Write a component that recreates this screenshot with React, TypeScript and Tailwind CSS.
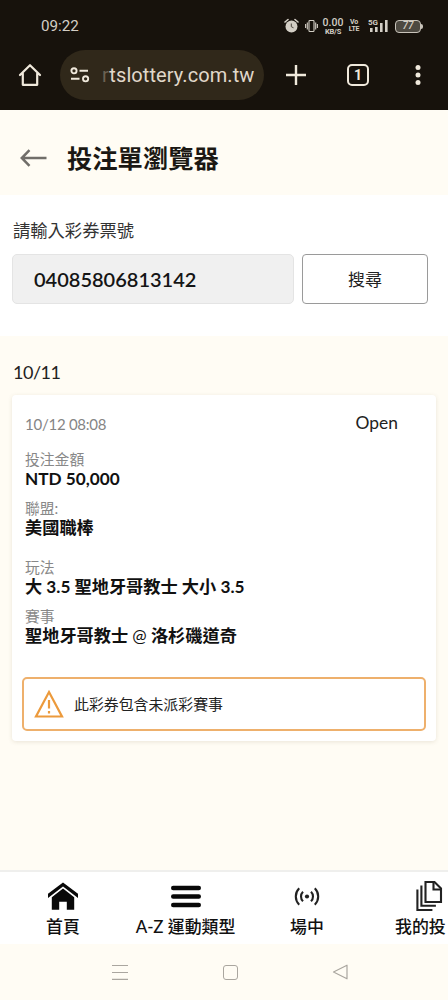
import React from "react";

const entries = [
  { label: "投注金額", value: "NTD 50,000", gap: "mt-[14px]" },
  { label: "聯盟:", value: "美國職棒", gap: "mt-[10px]" },
  { label: "玩法", value: "大 3.5 聖地牙哥教士 大小 3.5", gap: "mt-5" },
  {
    label: "賽事",
    value: (
      <>
        聖地牙哥教士 <span className="font-normal">@</span> 洛杉磯道奇
      </>
    ),
    gap: "mt-[10px]",
  },
];

function StatusBar() {
  return (
    <div className="flex h-[50px] items-center pt-[2px] pl-[41px] font-['Roboto',sans-serif] text-[#d3cec5]">
      <span className="w-[243px] text-[15.2px] leading-5">09:22</span>
      {/* alarm */}
      <svg width="15" height="16" viewBox="0 0 15 16" fill="none" className="shrink-0">
        <circle cx="7.5" cy="8.5" r="6" fill="currentColor" />
        <path d="M1 4 4 1.5M14 4 11 1.5" stroke="currentColor" strokeWidth="1.6" strokeLinecap="round" />
        <path d="M7.3 5.5v3.2l2.2 1.1" stroke="#4a453d" strokeWidth="1" />
      </svg>
      {/* vibrate */}
      <svg width="13" height="14" viewBox="0 0 13 14" fill="none" stroke="currentColor" strokeWidth="1.1" className="ml-[6px] shrink-0">
        <rect x="4" y="1.5" width="5" height="11" rx=".8" />
        <path d="M2.3 3.5v7M.6 5v4M10.7 3.5v7M12.4 5v4" />
      </svg>
      <div className="ml-[4px] flex w-[22px] flex-col items-center">
        <span className="text-[10.5px] leading-[10px] font-medium">0.00</span>
        <span className="text-[7.5px] leading-[7px] font-bold tracking-[-0.2px]">KB/S</span>
      </div>
      <div className="ml-[4px] flex w-[12px] flex-col items-center text-[7px] leading-[7px] font-bold tracking-[-0.3px]">
        <span>Vo</span>
        <span>LTE</span>
      </div>
      <svg width="22" height="16" viewBox="0 0 22 16" className="ml-[8px] shrink-0" fill="currentColor">
        <text x="0" y="7" fontSize="8" fontWeight="700">5G</text>
        <path d="M2 10h2.6v4H2zM7 9h2.6v5H7zM12 5h2.6v9H12zM17 2h2.6v12H17z" />
      </svg>
      <div className="ml-[5px] flex h-[13px] w-[26px] items-center justify-center rounded-[4px] border border-[#c8c3ba] bg-[#4d4941] text-[10px] leading-none font-medium italic">
        77
      </div>
      <span className="h-[5px] w-[2px] rounded-r bg-[#c8c3ba]" />
    </div>
  );
}

function BrowserBar() {
  return (
    <div className="flex h-[50px] items-center pl-[18px] text-[#f0e9dc]">
      <svg width="24" height="24" viewBox="0 0 24 24" fill="none" stroke="currentColor" strokeWidth="2.2" strokeLinejoin="round" strokeLinecap="round">
        <path d="M2 12 12 2.2 22 12M4.8 10.4v11.4h14.4V10.4" />
      </svg>
      <div className="ml-[18px] flex h-[50px] w-[204px] items-center rounded-full bg-[#30281a] pl-[10px]">
        <svg width="20" height="18" viewBox="0 0 20 18" fill="none" stroke="currentColor" strokeWidth="1.9">
          <circle cx="4" cy="4.8" r="2.6" />
          <path d="M9.5 4.8H18M1 12.8h8.5" />
          <circle cx="15.6" cy="12.8" r="2.6" />
        </svg>
        <span className="ml-[12px] font-['Roboto',sans-serif] text-[20px] leading-6 tracking-[0.08px] whitespace-nowrap text-[#e0d8ca]">
          <span className="text-[#6b6252]">r</span>tslottery.com.tw
        </span>
      </div>
      <svg width="20" height="20" viewBox="0 0 20 20" stroke="currentColor" strokeWidth="2.4" className="ml-[22px]">
        <path d="M0 10h20M10 0v20" />
      </svg>
      <div className="ml-[41px] flex h-[22px] w-[22px] items-center justify-center rounded-[5px] border-2 border-current font-['Roboto',sans-serif] text-[14px] leading-none font-bold">
        1
      </div>
      <svg width="6" height="20" viewBox="0 0 6 20" fill="currentColor" className="ml-[46px]">
        <circle cx="3" cy="2.5" r="2.5" />
        <circle cx="3" cy="10" r="2.5" />
        <circle cx="3" cy="17.5" r="2.5" />
      </svg>
    </div>
  );
}

function TicketCard() {
  return (
    <div className="mx-3 mt-[10px] h-[346px] rounded-[4px] bg-white px-[10px] pt-[19px] shadow-[0_1px_4px_rgba(90,70,30,0.13)]">
      <div className="flex h-[21px] items-center justify-between pr-[28px] pl-[3px]">
        <span className="text-[15px] tracking-[-0.25px] text-[#858585]">10/12 08:08</span>
        <span className="-mt-[2px] text-[17.4px] text-[#222]">Open</span>
      </div>
      {entries.map((entry) => (
        <div key={entry.label} className={`pl-[3px] ${entry.gap}`}>
          <div className="h-[20px] text-[14.8px] leading-[20px] text-[#888]">{entry.label}</div>
          <div className="h-[19px] text-[17.2px] leading-[20px] font-bold whitespace-nowrap text-[#111]">{entry.value}</div>
        </div>
      ))}
      <div className="mt-[32px] flex h-[54px] items-center rounded-[5px] border-2 border-[#eeb06c] pl-[9px]">
        <svg width="32" height="30" viewBox="0 0 32 30" fill="none" stroke="#ec9a3c" strokeWidth="2.2">
          <path d="M16 3 29 27.5H3z" />
          <path d="M16 11v8.5M16 22v2.4" />
        </svg>
        <span className="mt-px ml-[9px] text-[14.9px] text-[#222]">此彩券包含未派彩賽事</span>
      </div>
    </div>
  );
}

function TabBar() {
  return (
    <nav className="flex h-[74px] overflow-hidden border-t-2 border-[#efefed] bg-white text-[16.9px] leading-5 font-medium text-[#111]">
      <div className="flex w-[126px] shrink-0 flex-col items-center">
        <svg width="32" height="30" viewBox="0 0 32 30" className="mt-[9px]" fill="#080808">
          <path d="M16 1.5 31 12.8v4.2L16 5.6 1 17v-4.2z" />
          <path d="M16 7.6 27.2 16.2V28.8h-7.4v-8h-7.6v8H4.8V16.2z" />
        </svg>
        <span className="mt-[6px]">首頁</span>
      </div>
      <div className="flex w-[119px] shrink-0 flex-col items-center">
        <svg width="32" height="30" viewBox="0 0 32 30" className="mt-[9px]" stroke="#080808" strokeWidth="4.4" strokeLinecap="round">
          <path d="M3.2 7h25.6M3.2 15.5h25.6M3.2 24h25.6" />
        </svg>
        <span className="mt-[6px] whitespace-nowrap">A-Z 運動類型</span>
      </div>
      <div className="flex w-[124px] shrink-0 flex-col items-center">
        <svg width="26" height="30" viewBox="0 0 26 30" className="mt-[9px]" fill="none" stroke="#222" strokeWidth="2.1">
          <circle cx="13" cy="15.5" r="2.1" fill="#222" stroke="none" />
          <path d="M9 10.7a6.8 6.8 0 0 0 0 9.6M17 10.7a6.8 6.8 0 0 1 0 9.6M5.2 7.3a11.6 11.6 0 0 0 0 16.4M20.8 7.3a11.6 11.6 0 0 1 0 16.4" />
        </svg>
        <span className="mt-[6px]">場中</span>
      </div>
      <div className="flex w-[79px] shrink-0 flex-col pl-[26px]">
        <svg width="28" height="32" viewBox="0 0 28 32" className="mt-[8px] ml-[20px]" fill="none" stroke="#222" strokeWidth="2.1">
          <path d="M10.5 2h9L26 8.5V22H10.5z" />
          <path d="M18.5 2.5v7h7" />
          <path d="M6.4 5.5v20.3h14.5M2.4 9.5v20.5h15" />
        </svg>
        <span className="mt-[5px] whitespace-nowrap">我的投</span>
      </div>
    </nav>
  );
}

function SystemNav() {
  return (
    <div className="flex h-[56px] items-center pl-[112px] text-[#aaa69f]">
      <svg width="16" height="16" viewBox="0 0 16 16" stroke="currentColor" strokeWidth="1.2">
        <path d="M0 1.5h16M0 8.5h16M0 15.3h16" />
      </svg>
      <div className="ml-[95px] h-[15px] w-[15px] rounded-[3px] border border-current" />
      <svg width="16" height="16" viewBox="0 0 16 16" fill="none" stroke="currentColor" strokeWidth="1.2" strokeLinejoin="round" className="ml-[94px]">
        <path d="M1.5 8 15 1.2v13.6z" />
      </svg>
    </div>
  );
}

export default function App() {
  return (
    <div className="flex h-[1000px] w-[448px] flex-col overflow-hidden bg-[#fffcf4] font-['Lato','Noto_Sans_CJK_TC',sans-serif]">
      <header className="h-[110px] shrink-0 bg-[#17120c]">
        <StatusBar />
        <BrowserBar />
      </header>

      <div className="flex h-[85px] shrink-0 items-center pt-[11px] pl-5">
        <svg width="27" height="18" viewBox="0 0 27 18" fill="none" stroke="#716e69" strokeWidth="2.5">
          <path d="M26.5 9H2M9.5 1.2 1.8 9l7.7 7.8" />
        </svg>
        <h1 className="ml-[20px] text-[25.3px] leading-8 font-bold text-[#1b1813]">投注單瀏覽器</h1>
      </div>

      <section className="h-[141px] shrink-0 bg-white pt-[25px] pl-3">
        <p className="h-[22px] pl-px text-[17.3px] leading-[22px] text-[#333]">請輸入彩券票號</p>
        <div className="mt-[12px] flex gap-2">
          <div className="flex h-[50px] w-[282px] items-center rounded-[5px] border border-[#e4e4e4] bg-[#f0f0f0] pl-[21px] text-[20px] font-semibold text-[#151515]">
            04085806813142
          </div>
          <button className="h-[50px] w-[126px] rounded-[4px] border border-[#9a9a9a] bg-white pt-px text-[17px] text-[#222]">搜尋</button>
        </div>
      </section>

      <main className="flex-1 pt-[25px]">
        <p className="h-[24px] pl-[13px] text-[18px] leading-[22px] tracking-[-0.5px] text-[#222]">10/11</p>
        <TicketCard />
      </main>

      <TabBar />
      <SystemNav />
    </div>
  );
}
